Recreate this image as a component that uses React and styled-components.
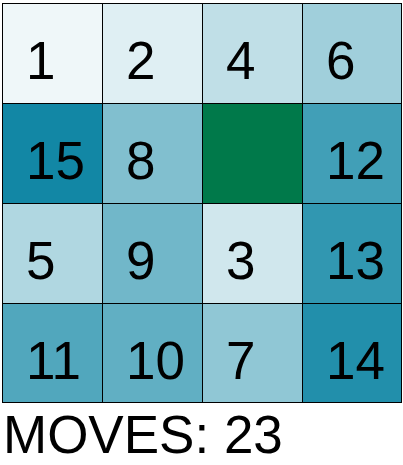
import React from "react";
import styled, { createGlobalStyle } from "styled-components";

const Global = createGlobalStyle`
  html, body { margin: 0; padding: 0; background: #ffffff; }
  body { font-family: "Liberation Sans", Arial, sans-serif; }
`;

const Page = styled.div`
  padding: 3px 0 0 2px;
`;

const Board = styled.div`
  display: grid;
  grid-template-columns: 99px 99px 99px 98px;
  grid-template-rows: 99px 99px 99px 98px;
  gap: 1px;
  padding: 1px;
  width: 400px;
  box-sizing: border-box;
  background: #000000;
`;

const Tile = styled.div`
  background: ${(p) => p.$bg};
  color: #000000;
  font-size: 53px;
  line-height: normal;
  padding: 26px 0 0 23px;
  box-sizing: border-box;
  overflow: hidden;
  white-space: nowrap;
`;

const Moves = styled.div`
  font-size: 53px;
  line-height: normal;
  color: #000000;
  padding-left: 1px;
  margin-top: 1px;
`;

const tiles = [1, 2, 4, 6, 15, 8, 0, 12, 5, 9, 3, 13, 11, 10, 7, 14];

function shade(n) {
  if (n === 0) return "#00794a";
  const t = n / 16;
  const mix = (c) => Math.round(255 - t * (255 - c));
  return `rgb(${mix(2)}, ${mix(127)}, ${mix(159)})`;
}

export default function App() {
  return (
    <Page>
      <Global />
      <Board>
        {tiles.map((n, i) => (
          <Tile key={i} $bg={shade(n)}>
            {n === 0 ? "" : n}
          </Tile>
        ))}
      </Board>
      <Moves>MOVES: 23</Moves>
    </Page>
  );
}
